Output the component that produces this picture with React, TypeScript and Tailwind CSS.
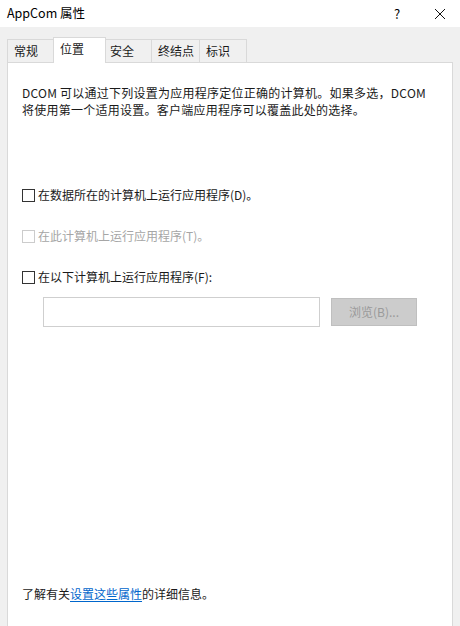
import React from 'react'

const font = { fontFamily: '"Microsoft YaHei UI", "Noto Sans CJK SC", sans-serif' }

function Tab({ label, active, first }: { label: string; active?: boolean; first?: boolean }) {
  if (active) {
    return (
      <div className="relative z-10 -mb-px -mx-[2px] h-[26px] bg-white border border-b-0 border-[#d9d9d9] pl-[6px] w-[53px] leading-[22px]">
        {label}
      </div>
    )
  }
  return (
    <div
      className={`h-[23px] mt-[3px] bg-[#f0f0f0] border border-b-0 border-[#d9d9d9] pl-[6px] leading-[21px] ${first ? '' : '-ml-px'}`}
    >
      {label}
    </div>
  )
}

function Check({ label, disabled }: { label: string; disabled?: boolean }) {
  return (
    <div className={`flex items-center gap-[3px] ${disabled ? 'text-[#a6a6a6]' : 'text-[#1a1a1a]'}`}>
      <span className={`w-[13px] h-[13px] border bg-white ${disabled ? 'border-[#cccccc]' : 'border-[#333333]'}`} />
      <span>{label}</span>
    </div>
  )
}

export default function App() {
  return (
    <div className="w-[460px] h-[626px] bg-[#f0f0f0] overflow-hidden flex flex-col text-[12px] text-[#1a1a1a]" style={font}>
      {/* title bar */}
      <div className="h-[27px] bg-white flex items-center pl-[7px] shrink-0">
        <span className="text-[12.5px] text-black">AppCom 属性</span>
        <span className="ml-auto w-[30px] text-center text-[13px] mr-[22px] text-black">?</span>
        <svg width="12" height="12" viewBox="0 0 12 12" className="mr-[14px]">
          <path d="M1 1 L11 11 M11 1 L1 11" stroke="#111" strokeWidth="1" />
        </svg>
      </div>

      {/* tabs */}
      <div className="flex items-end pl-[7px] pt-[9px] shrink-0">
        <div className="w-[48px]"><Tab label="常规" first /></div>
        <div className="w-[49px]"><Tab label="位置" active /></div>
        <div className="w-[48px]"><Tab label="安全" /></div>
        <div className="w-[48px]"><Tab label="终结点" /></div>
        <div className="w-[47px]"><Tab label="标识" /></div>
      </div>

      {/* panel */}
      <div className="flex-1 ml-[7px] mr-[7px] bg-white border border-[#d9d9d9] border-b-0 pl-[14px] pr-[10px] pt-[21px] flex flex-col">
        <p className="leading-[17px] tracking-[0.25px]">
          DCOM 可以通过下列设置为应用程序定位正确的计算机。如果多选，DCOM
          <br />
          将使用第一个适用设置。客户端应用程序可以覆盖此处的选择。
        </p>

        <div className="mt-[68px] flex flex-col gap-[23px]">
          <Check label="在数据所在的计算机上运行应用程序(D)。" />
          <Check label="在此计算机上运行应用程序(T)。" disabled />
          <Check label="在以下计算机上运行应用程序(F):" />
        </div>

        <div className="mt-[11px] ml-[21px] flex items-center gap-[11px]">
          <div className="w-[277px] h-[30px] border border-[#cfcfcf] bg-white" />
          <div className="w-[86px] h-[28px] bg-[#cccccc] border border-[#bfbfbf] text-[#9a9a9a] flex items-center justify-center">
            浏览(B)...
          </div>
        </div>

        <div className="mt-auto mb-[23px]">
          了解有关<a className="text-[#0066cc] underline underline-offset-2">设置这些属性</a>的详细信息。
        </div>
      </div>
    </div>
  )
}
